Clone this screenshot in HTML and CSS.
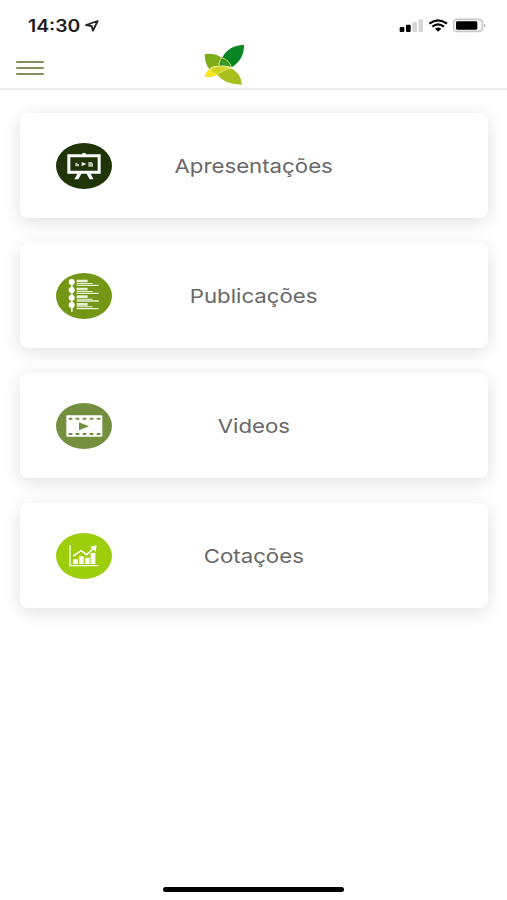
FILE: index.html
```html
<!DOCTYPE html>
<html lang="pt">
<head>
<meta charset="utf-8">
<title>Menu</title>
<link rel="stylesheet" href="styles.css">
</head>
<body>
<div class="screen">
  <div class="status">
    <span class="time">14:30</span>
    <svg class="location" viewBox="0 0 42 36"><path d="M3 15 38 3 24 32 20 18Z" fill="none" stroke="#222" stroke-width="5.5" stroke-linejoin="round"/></svg>
    <svg class="indicators" viewBox="0 0 270 48">
      <g fill="#000"><rect x="5" y="27" width="14" height="15" rx="3"/><rect x="24" y="20" width="14" height="22" rx="3"/></g>
      <g fill="#d6d6d6"><rect x="43" y="12" width="14" height="30" rx="3"/><rect x="62" y="4" width="13" height="38" rx="3"/></g>
      <g fill="none" stroke="#000" stroke-width="6.5"><path d="M94 17Q120-3 147 17"/><path d="M103 26Q120 12 138 26"/></g>
      <path d="M111 32Q120 25 130 32L120 41Z"/>
      <rect x="167" y="4" width="86" height="36" rx="10" fill="#fff" stroke="#c8c8c8" stroke-width="5"/>
      <rect x="174" y="10" width="64" height="25" rx="4"/>
      <path d="M258 17Q266 22 258 28Z" fill="#aaa"/>
    </svg>
  </div>
  <header class="header">
    <div class="menu"><i></i><i></i><i></i></div>
    <svg class="logo" viewBox="72 42 122 124">
      <path d="M126 84Q143 47 192 44Q193 88 155 112Q144 91 126 84Z" fill="#078522"/>
      <path d="M73 72Q111 70 124 84L117 108Q96 108 87 118Q73 100 73 72Z" fill="#7fad18"/>
      <path d="M123 83Q145 88 155 112Q137 105 117 108Z" fill="#399622"/>
      <path d="M111 135Q131 111 156 117Q182 130 186 165Q134 165 111 135Z" fill="#a8bf20"/>
      <path d="M74 142Q79 112 112 109Q139 107 154 115Q132 119 111 136Q92 143 74 142Z" fill="#d3d51c"/>
      <path d="M74 142Q76 126 89 117Q97 130 111 136Q92 143 74 142Z" fill="#fae51d"/>
      <path d="M124 84Q113 100 117 108M87 118Q108 105 155 115Q128 119 111 136M87 118Q97 130 111 136M126 84Q147 89 155 115" fill="none" stroke="#e5e878" stroke-width="2.5"/>
    </svg>
  </header>
  <main class="list">
    <div class="card">
      <svg class="icon" viewBox="18 24 168 138">
        <ellipse cx="102" cy="93" rx="84" ry="69" fill="#203407"/>
        <g fill="#fff"><path d="M97 54h10v5h-10zM52 58h100v9H52zM52 107h100v9H52zM52 64h9v48h-9zM143 64h9v48h-9z"/><path d="M83 115h12l-10 18H73zM109 115h12l10 18h-12z"/></g>
        <path d="M95 81l14 6-14 7z" fill="#fff"/><path d="M76 83h6v4h5v7H76zM115 81h10l4 5v9h-14z" fill="#b8c1aa"/>
      </svg>
      <span class="label">Apresentações</span>
    </div>
    <div class="card">
      <svg class="icon" viewBox="18 24 168 138">
        <ellipse cx="102" cy="93" rx="84" ry="69" fill="#739714"/>
        <g fill="#fff"><path d="M63 50h5v90h-5z"/><circle cx="65" cy="51" r="9"/><circle cx="65" cy="75" r="9"/><circle cx="65" cy="98" r="9"/><circle cx="65" cy="120" r="9"/></g>
        <g fill="#eaf1d8"><path id="row" d="M80 44h33v8H80zM80 54h48v3H80zM80 59h66v4H80z"/><use href="#row" y="24"/><use href="#row" y="47"/><use href="#row" y="70"/></g>
      </svg>
      <span class="label">Publicações</span>
    </div>
    <div class="card">
      <svg class="icon" viewBox="18 24 168 138">
        <ellipse cx="102" cy="93" rx="84" ry="69" fill="#748f3d"/>
        <rect x="49" y="61" width="108" height="64" rx="3" fill="#fff"/>
        <path d="M56 71h96M56 117h96" stroke="#748f3d" stroke-width="6" stroke-dasharray="11 10"/>
        <path d="M87 82l30 12-30 12z" fill="#748f3d"/>
      </svg>
      <span class="label">Videos</span>
    </div>
    <div class="card">
      <svg class="icon" viewBox="18 24 168 138">
        <ellipse cx="102" cy="93" rx="84" ry="69" fill="#9dce0b"/>
        <path d="M60 61v61h85" fill="none" stroke="#fff" stroke-width="4"/>
        <path d="M70 103h14v14H70zM87 94h14v23H87zM105 98h14v19h-14zM122 84h14v33h-14z" fill="#fff"/>
        <path d="M70 93 93 77l17 12 22-20" fill="none" stroke="#fff" stroke-width="5"/><path d="M120 65l20-4-3 19z" fill="#fff"/>
      </svg>
      <span class="label">Cotações</span>
    </div>
  </main>
  <div class="home"></div>
</div>
</body>
</html>
```
FILE: styles.css
```css
body { margin: 0; background: #fff; font-family: Inter, "Liberation Sans", sans-serif; }
.screen { width: 507px; height: 900px; display: flex; flex-direction: column; overflow: hidden; }
.status { height: 44px; box-sizing: border-box; padding: 16px 19px 0 28px; display: flex; align-items: flex-start; }
.time { width: 57px; font-size: 16.7px; line-height: 20px; font-weight: 600; color: #1c1c1c; transform: scaleX(1.16); transform-origin: left; }
.location { width: 14px; height: 12px; margin-top: 4px; }
.indicators { width: 90px; height: 16px; margin: 2px 0 0 auto; }
.header { height: 46px; box-sizing: border-box; border-bottom: 2px solid #ececec; display: flex; align-items: flex-start; }
.menu { width: 28px; margin: 17px 0 0 16px; display: flex; flex-direction: column; gap: 4px; }
.menu i { height: 2px; background: #84905c; border-radius: 1px; }
.logo { width: 41px; height: 41px; margin-left: 159.5px; }
.list { padding: 23px 19.5px 0; display: grid; gap: 25px; }
.card { height: 105px; box-sizing: border-box; padding: 0 36px; border-radius: 8px; background: #fff; box-shadow: 0 4px 18px rgba(0, 0, 0, .12); display: grid; grid-template-columns: 56px 1fr 56px; align-items: center; }
.icon { width: 56px; height: 46px; }
.label { justify-self: center; padding-top: 3px; font-size: 19px; line-height: 24px; color: #686868; transform: scaleX(1.17); }
.home { width: 181px; height: 5px; margin: auto auto 8px; border-radius: 3px; background: #000; }
```
